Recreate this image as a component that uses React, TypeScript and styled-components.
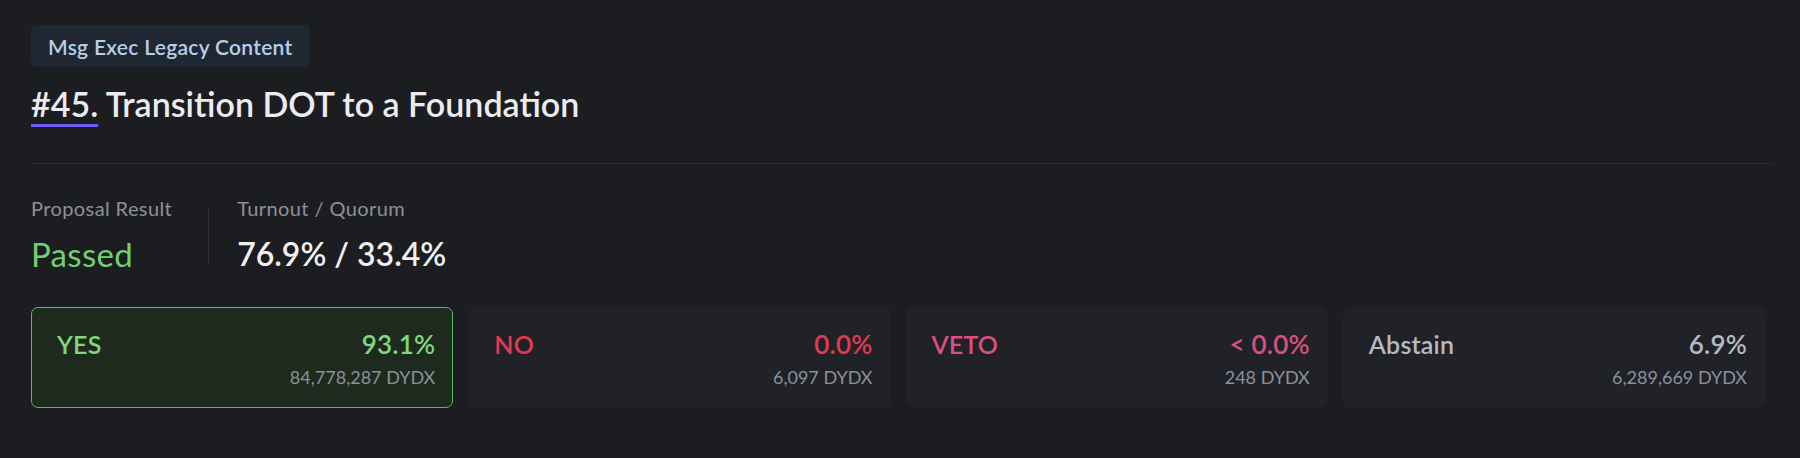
import React from 'react';
import styled, { createGlobalStyle } from 'styled-components';

const GlobalStyle = createGlobalStyle`
  html, body {
    margin: 0;
    padding: 0;
    background: #1c1d21;
  }
  body {
    font-family: Lato, "Noto Sans", sans-serif;
    min-height: 458px;
  }
`;

const Page = styled.div`
  padding: 25px 26px 0 31px;
`;

const TypeBadge = styled.div`
  display: inline-flex;
  align-items: center;
  height: 42px;
  padding: 0 17px;
  border-radius: 6px;
  background: #1f2733;
  color: #b8cfe8;
  font-size: 21px;
  font-weight: 600;
  letter-spacing: 0.3px;
`;

const Title = styled.h1`
  margin: 17px 0 0;
  font-size: 34px;
  line-height: 40px;
  font-weight: 600;
  color: #ececef;
`;

const ProposalId = styled.span`
  text-decoration: underline;
  text-decoration-color: #6a5cf5;
  text-decoration-thickness: 3px;
  text-underline-offset: 7px;
`;

const Divider = styled.hr`
  margin: 39px 0 0;
  border: 0;
  height: 1px;
  background: #2a2b31;
`;

const Stats = styled.div`
  display: flex;
  margin-top: 32px;
`;

const Stat = styled.div`
  display: flex;
  flex-direction: column;
  gap: 14px;
`;

const StatSeparator = styled.div`
  width: 1px;
  height: 56px;
  margin: 12px 28px 0 36px;
  background: #2c2d33;
`;

const StatLabel = styled.div`
  font-size: 20px;
  line-height: 24px;
  letter-spacing: 0.4px;
  color: #8e9099;
`;

const StatValue = styled.div<{ $tone?: 'pass' }>`
  line-height: 40px;
  font-size: ${(p) => (p.$tone === 'pass' ? '33px' : '32px')};
  letter-spacing: ${(p) => (p.$tone === 'pass' ? '0.3px' : '0')};
  font-weight: ${(p) => (p.$tone === 'pass' ? 400 : 600)};
  color: ${(p) => (p.$tone === 'pass' ? '#72d072' : '#f1f1f3')};
`;

const Cards = styled.div`
  display: grid;
  grid-template-columns: repeat(4, 1fr);
  gap: 15px;
  margin-top: 33px;
  padding-right: 9px;
`;

const Card = styled.div<{ $active?: boolean }>`
  display: grid;
  grid-template-columns: auto 1fr;
  row-gap: 8px;
  height: 101px;
  box-sizing: border-box;
  padding: 21px 17px 20px 25px;
  border-radius: 7px;
  border: 1px solid ${(p) => (p.$active ? '#5cb85c' : '#212228')};
  background: ${(p) => (p.$active ? '#1e2a1e' : '#212228')};
`;

const OptionName = styled.div<{ $color: string }>`
  font-size: 25px;
  line-height: 30px;
  font-weight: 600;
  letter-spacing: 0.2px;
  color: ${(p) => p.$color};
`;

const OptionPercent = styled(OptionName)`
  text-align: right;
  font-size: 26px;
`;

const OptionAmount = styled.div`
  grid-column: 1 / span 2;
  text-align: right;
  font-size: 18px;
  line-height: 20px;
  color: #8b909c;
`;

const options = [
  { name: 'YES', percent: '93.1%', amount: '84,778,287 DYDX', color: '#7fd77f', active: true },
  { name: 'NO', percent: '0.0%', amount: '6,097 DYDX', color: '#e23a50' },
  { name: 'VETO', percent: '< 0.0%', amount: '248 DYDX', color: '#d9507f' },
  { name: 'Abstain', percent: '6.9%', amount: '6,289,669 DYDX', color: '#b7b9c2' },
];

export default function App() {
  return (
    <>
      <GlobalStyle />
      <Page>
        <TypeBadge>Msg Exec Legacy Content</TypeBadge>
        <Title>
          <ProposalId>#45.</ProposalId> Transition DOT to a Foundation
        </Title>
        <Divider />
        <Stats>
          <Stat>
            <StatLabel>Proposal Result</StatLabel>
            <StatValue $tone="pass">Passed</StatValue>
          </Stat>
          <StatSeparator />
          <Stat>
            <StatLabel>Turnout / Quorum</StatLabel>
            <StatValue>76.9% / 33.4%</StatValue>
          </Stat>
        </Stats>
        <Cards>
          {options.map((o) => (
            <Card key={o.name} $active={o.active}>
              <OptionName $color={o.color}>{o.name}</OptionName>
              <OptionPercent $color={o.color}>{o.percent}</OptionPercent>
              <OptionAmount>{o.amount}</OptionAmount>
            </Card>
          ))}
        </Cards>
      </Page>
    </>
  );
}
